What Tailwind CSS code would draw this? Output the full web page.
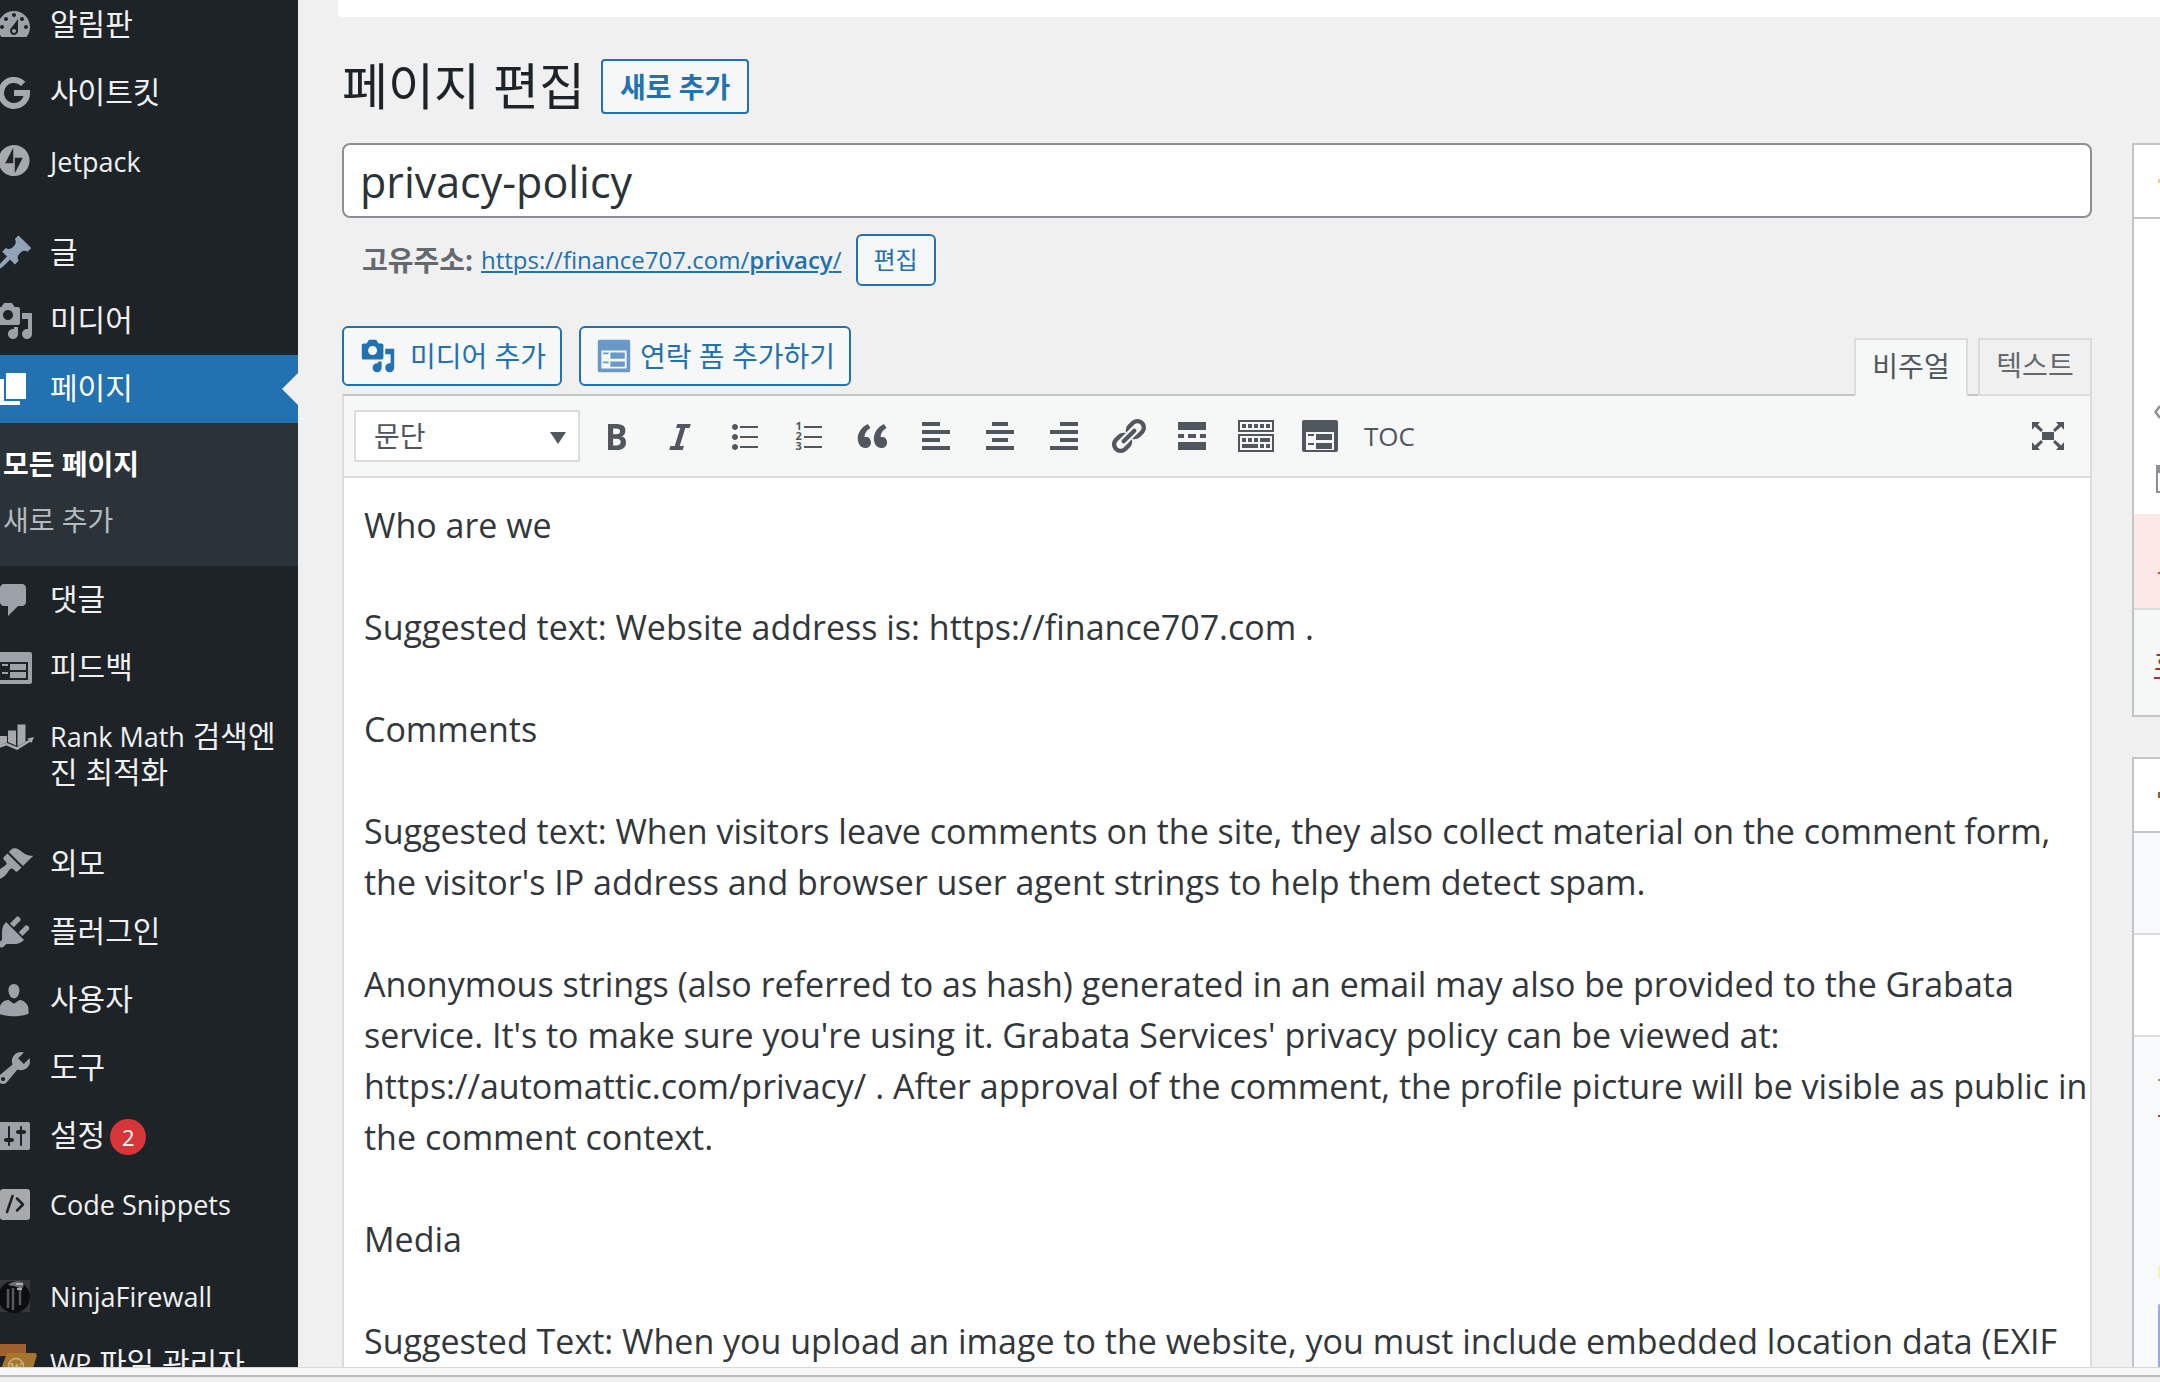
<!DOCTYPE html>
<html lang="ko">
<head>
    <meta charset="UTF-8">
    <meta name="viewport" content="width=device-width, initial-scale=1.0">
    <title>페이지 편집</title>
    <script src="https://cdn.jsdelivr.net/npm/@tailwindcss/browser@4"></script>
</head>
<body class="h-screen overflow-hidden flex flex-col bg-[#f0f0f0] text-[#1d2327] font-['Open_Sans','Noto_Sans_CJK_KR',sans-serif]">
  <div class="flex flex-1 min-h-0 overflow-hidden">

    <!-- admin menu -->
    <nav class="shrink-0 w-[298px] overflow-hidden bg-[#1d2327] text-[#f0f0f1] text-[30px] leading-[38px]">
      <ul class="-ml-[22px] -mt-[9px] w-80">
        <li>
          <a href="#" class="flex h-[68px] px-4 py-3.5">
            <svg class="size-10 shrink-0 fill-[#9ca2a7]" viewBox="0 0 20 20"><path d="M3.76 16h12.48c1.1-1.37 1.76-3.11 1.76-5 0-4.42-3.58-8-8-8s-8 3.58-8 8c0 1.89.66 3.63 1.76 5zM10 4c.55 0 1 .45 1 1s-.45 1-1 1-1-.45-1-1 .45-1 1-1zM6 6c.55 0 1 .45 1 1s-.45 1-1 1-1-.45-1-1 .45-1 1-1zm8 0c.55 0 1 .45 1 1s-.45 1-1 1-1-.45-1-1 .45-1 1-1zm-5.37 5.55L12 7v6c0 1.1-.9 2-2 2s-2-.9-2-2c0-.57.24-1.08.63-1.45zM4 10c.55 0 1 .45 1 1s-.45 1-1 1-1-.45-1-1 .45-1 1-1zm12 0c.55 0 1 .45 1 1s-.45 1-1 1-1-.45-1-1 .45-1 1-1zm-5 3c0-.55-.45-1-1-1s-1 .45-1 1 .45 1 1 1 1-.45 1-1z"/></svg>
            <span class="pl-4">알림판</span>
          </a>
        </li>
        <li>
          <a href="#" class="flex h-[68px] px-4 py-3.5">
            <svg class="size-10 shrink-0" viewBox="0 0 40 40" fill="none" stroke="#a7aaad" stroke-width="6"><path d="M29.2 10.8A13 13 0 1 0 33 20H20"/></svg>
            <span class="pl-4">사이트킷</span>
          </a>
        </li>
        <li>
          <a href="#" class="flex h-[68px] px-4 py-3.5">
            <svg class="size-10 shrink-0 fill-[#a7aaad]" viewBox="-4.5 -4 41 41"><path d="M16 0C7.2 0 0 7.2 0 16s7.2 16 16 16 16-7.2 16-16S24.8 0 16 0zM15.2 18.7H7l8.2-15.7v15.7zM16.8 29V13.2H25L16.8 29z"/></svg>
            <span class="pl-4 text-[27px] leading-[42px]">Jetpack</span>
          </a>
        </li>
        <li class="mt-6">
          <a href="#" class="flex h-[68px] px-4 py-3.5">
            <svg class="size-10 shrink-0 fill-[#91a4b7]" viewBox="0 0 20 20"><path d="M10.44 3.02l1.82-1.82 6.36 6.35-1.83 1.82c-1.05-.68-2.48-.57-3.41.36l-.75.75c-.92.93-1.04 2.35-.35 3.41l-1.83 1.82-2.41-2.41-2.8 2.79c-.42.42-3.38 2.71-3.8 2.29s1.86-3.39 2.28-3.81l2.79-2.79L4.1 9.36l1.83-1.82c1.05.69 2.48.57 3.4-.36l.75-.75c.93-.92 1.05-2.35.36-3.41z"/></svg>
            <span class="pl-4">글</span>
          </a>
        </li>
        <li>
          <a href="#" class="flex h-[68px] px-4 py-3.5">
            <svg class="size-10 shrink-0 fill-[#9ca2a7]" viewBox="0 0 20 20"><path d="M13 11V4c0-.55-.45-1-1-1h-1.67L9 1H5L3.67 3H2c-.55 0-1 .45-1 1v7c0 .55.45 1 1 1h10c.55 0 1-.45 1-1zM7 4.5c1.38 0 2.5 1.12 2.5 2.5S8.38 9.5 7 9.5 4.5 8.38 4.5 7 5.62 4.5 7 4.5zM14 6h5v10.5c0 1.38-1.12 2.5-2.5 2.5S14 17.88 14 16.5s1.12-2.5 2.5-2.5c.17 0 .34.02.5.05V9h-3V6zm-4 8.05V13h2v3.5c0 1.38-1.12 2.5-2.5 2.5S7 17.88 7 16.5 8.12 14 9.5 14c.17 0 .34.02.5.05z"/></svg>
            <span class="pl-4">미디어</span>
          </a>
        </li>
        <li>
          <a href="#" aria-current="page" class="relative flex h-[68px] px-4 py-3.5 bg-[#2271b1] text-white">
            <svg class="size-10 shrink-0 fill-white" viewBox="0 0 20 20"><path d="M6 15V2h10v13H6zm-1 1h8v2H3V5h2v11z"/></svg>
            <span class="pl-4">페이지</span>
            <svg class="absolute right-0 top-[18px] w-4 h-8 fill-[#f0f0f0]" viewBox="0 0 16 32"><path d="M16 0v32L0 16z"/></svg>
          </a>
          <ul class="h-[143px] pt-[13px] pl-[25px] bg-[#2c3338] text-[28px]">
            <li><a href="#" class="block py-2.5 leading-9 font-bold text-white">모든 페이지</a></li>
            <li><a href="#" class="block py-2.5 leading-9 text-[#b4babe]">새로 추가</a></li>
          </ul>
        </li>
        <li>
          <a href="#" class="flex h-[68px] px-4 py-3.5">
            <svg class="size-10 shrink-0 fill-[#9ca2a7]" viewBox="0 0 20 20"><path d="M5 2h9c1.1 0 2 .9 2 2v7c0 1.1-.9 2-2 2h-2l-5 5v-5H5c-1.1 0-2-.9-2-2V4c0-1.1.9-2 2-2z"/></svg>
            <span class="pl-4">댓글</span>
          </a>
        </li>
        <li>
          <a href="#" class="flex h-[68px] px-4 py-3.5">
            <svg class="size-10 shrink-0 fill-[#9ca2a7]" viewBox="0 0 20 20"><path d="M2 2h16c.55 0 1 .45 1 1v14c0 .55-.45 1-1 1H2c-.55 0-1-.45-1-1V3c0-.55.45-1 1-1zm15 14V7H3v9h14zM4 8v1h3V8H4zm4 0v3h8V8H8zm-4 4v1h3v-1H4zm4 0v3h8v-3H8z"/></svg>
            <span class="pl-4">피드백</span>
          </a>
        </li>
        <li>
          <a href="#" class="flex h-[104px] px-4 py-4">
            <svg class="size-10 shrink-0" viewBox="0 0 40 40" fill="#a7aaad"><path d="M4 18h9v6.5L4 28zM14 12.5h8v15L14 24zM23.5 6.5h8V24l-8 4.5z"/><path d="M3 29.5l9.5-3.5L23 30.5 36 22.5" fill="none" stroke="#a7aaad" stroke-width="2.5"/><path d="M33.5 20.5l6.5-1.5-2.5 6z"/></svg>
            <span class="pl-4 whitespace-nowrap leading-[35px]"><span class="text-[27px]">Rank Math</span> 검색엔<br>진 최적화</span>
          </a>
        </li>
        <li class="mt-6">
          <a href="#" class="flex h-[68px] px-4 py-3.5">
            <svg class="size-10 shrink-0 fill-[#9ca2a7]" viewBox="0 0 20 20"><path d="M14.48 11.06L7.41 3.99l1.5-1.5c.5-.56 2.3-.47 3.51.32 1.21.8 1.43 1.28 2.91 2.1 1.18.64 2.45 1.26 4.45.85zm-.71.71L6.7 4.7 4.93 6.47c-.39.39-.39 1.02 0 1.41l1.06 1.06c.39.39.39 1.03 0 1.42-.6.6-1.43 1.11-2.21 1.69-.35.26-.7.53-1.01.84C1.43 14.23.4 16.08 1.4 17.07c.99 1 2.84-.03 4.18-1.36.31-.31.58-.66.85-1.02.57-.78 1.08-1.61 1.69-2.21.39-.39 1.02-.39 1.41 0l1.06 1.06c.39.39 1.02.39 1.41 0z"/></svg>
            <span class="pl-4">외모</span>
          </a>
        </li>
        <li>
          <a href="#" class="flex h-[68px] px-4 py-3.5">
            <svg class="size-10 shrink-0 fill-[#9ca2a7]" viewBox="0 0 20 20"><path d="M13.11 4.36L9.87 7.6 8 5.73l3.24-3.24c.35-.34 1.05-.2 1.56.32.52.51.66 1.21.31 1.55zm-8 1.77l.91-1.12 9.01 9.01-1.19.84c-.71.71-2.63 1.16-3.82 1.16H6.14L4.9 17.26c-.59.59-1.54.59-2.12 0-.59-.58-.59-1.53 0-2.12l1.24-1.24v-3.88c0-1.13.4-3.19 1.09-3.89zm7.26 3.97l3.24-3.24c.34-.35 1.04-.21 1.55.31.52.51.66 1.21.31 1.55l-3.24 3.25z"/></svg>
            <span class="pl-4">플러그인</span>
          </a>
        </li>
        <li>
          <a href="#" class="flex h-[68px] px-4 py-3.5">
            <svg class="size-10 shrink-0 fill-[#9ca2a7]" viewBox="0 0 20 20"><path d="M10 9.25c-2.27 0-2.73-3.44-2.73-3.44C7 4.02 7.82 2 9.97 2c2.16 0 2.98 2.02 2.71 3.81 0 0-.41 3.44-2.68 3.44zm0 2.57L12.72 10c2.39 0 4.52 2.33 4.52 4.53v2.49s-3.65 1.13-7.24 1.13c-3.65 0-7.24-1.13-7.24-1.13v-2.49c0-2.25 1.94-4.48 4.47-4.48z"/></svg>
            <span class="pl-4">사용자</span>
          </a>
        </li>
        <li>
          <a href="#" class="flex h-[68px] px-4 py-3.5">
            <svg class="size-10 shrink-0 fill-[#9ca2a7]" viewBox="0 0 20 20"><path d="M16.68 9.77c-1.34 1.34-3.3 1.67-4.95.99l-5.41 6.52c-.99.99-2.59.99-3.58 0s-.99-2.59 0-3.57l6.52-5.42c-.68-1.65-.35-3.61.99-4.95 1.28-1.28 3.12-1.62 4.72-1.06l-2.89 2.89 2.82 2.82 2.86-2.87c.53 1.58.18 3.39-1.08 4.65zM3.81 16.21c.4.39 1.04.39 1.43 0 .4-.4.4-1.04 0-1.43-.39-.4-1.03-.4-1.43 0-.39.39-.39 1.03 0 1.43z"/></svg>
            <span class="pl-4">도구</span>
          </a>
        </li>
        <li>
          <a href="#" class="flex h-[68px] px-4 py-3.5">
            <svg class="size-10 shrink-0 fill-[#9ca2a7]" viewBox="0 0 20 20"><path d="M18 16V4c0-.55-.45-1-1-1H3c-.55 0-1 .45-1 1v12c0 .55.45 1 1 1h14c.55 0 1-.45 1-1zM8 11h1c.55 0 1 .45 1 1s-.45 1-1 1H8v1.5c0 .28-.22.5-.5.5s-.5-.22-.5-.5V13H6c-.55 0-1-.45-1-1s.45-1 1-1h1V5.5c0-.28.22-.5.5-.5s.5.22.5.5V11zm5-2h-1c-.55 0-1-.45-1-1s.45-1 1-1h1V5.5c0-.28.22-.5.5-.5s.5.22.5.5V7h1c.55 0 1 .45 1 1s-.45 1-1 1h-1v5.5c0 .28-.22.5-.5.5s-.5-.22-.5-.5V9z"/></svg>
            <span class="pl-4">설정</span>
            <span class="ml-[5px] mt-[3px] size-9 rounded-full bg-[#d63638] text-white text-center text-[22px] leading-9">2</span>
          </a>
        </li>
        <li>
          <a href="#" class="flex h-[68px] px-4 py-3.5">
            <svg class="size-10 shrink-0" viewBox="0 0 40 40"><rect x="6" y="5" width="30" height="31" rx="3" fill="#a7aaad"/><path d="M18.5 12L13 28M23 14.5l6 6-6 6" fill="none" stroke="#1d2327" stroke-width="2.5" stroke-linecap="round" stroke-linejoin="round"/></svg>
            <span class="pl-4 text-[27px] leading-[42px]">Code Snippets</span>
          </a>
        </li>
        <li class="mt-6">
          <a href="#" class="flex h-[68px] px-4 py-3.5">
            <svg class="size-10 shrink-0" viewBox="0 0 40 40"><rect x="4" y="4" width="32" height="32" fill="#35383b"/><circle cx="20" cy="21" r="16" fill="#0c0d0e"/><path d="M14 9c3-4 12-5 15-2 2 3-1 6-3 6-3-3-8-3-12-4z" fill="#6b6d6f"/><path d="M14 13v19M19 12v22M26 11v18" stroke="#77797b" stroke-width="2.5" opacity=".7"/><path d="M22 8h7M23 13h5" stroke="#a9abad" stroke-width="2"/></svg>
            <span class="pl-4 text-[27px] leading-[42px]">NinjaFirewall</span>
          </a>
        </li>
        <li>
          <a href="#" class="flex h-[68px] px-4 py-3.5">
            <svg class="size-10 shrink-0 overflow-visible" viewBox="0 0 40 40"><path d="M2 0h30v12H2z" fill="#a0602d"/><path d="M13 9h28q3 1 1 5l-7 24H2z" fill="#a5772d"/><circle cx="22" cy="22" r="7.5" fill="none" stroke="#c9b183" stroke-width="1.5"/><text x="22" y="27" text-anchor="middle" font-family="Liberation Serif" font-weight="700" font-size="13" fill="#c9b183">W</text></svg>
            <span class="pl-4 whitespace-nowrap"><span class="text-[27px]">WP</span> 파일 관리자</span>
          </a>
        </li>
      </ul>
    </nav>

    <main class="flex-1 min-w-0 flex flex-col pl-11">
      <div class="h-[17px] shrink-0 -ml-1 rounded-bl bg-white"></div>

      <div class="flex items-center gap-4 h-[55px] mt-[42px]">
        <h1 class="text-[50px] leading-[55px]">페이지 편집</h1>
        <a href="#" class="flex items-center h-[55px] px-[17px] border-2 border-[#2271b1] rounded bg-[#f6f7f7] text-[28px] leading-9 font-bold text-[#2271b1]">새로 추가</a>
      </div>

      <div class="flex flex-1 min-h-0 gap-10 mt-[29px]">
        <div class="flex-1 min-w-0 flex flex-col">
          <input type="text" aria-label="제목" value="privacy-policy" class="shrink-0 h-[75px] px-4 pt-0.5 border-2 border-[#8c8f94] rounded-lg bg-white text-[43px] text-[#2c3338]">

          <div class="flex items-center h-[52px] mt-4 pl-5 text-2xl text-[#646970]">
            <div class="text-[28px] leading-9 font-bold">고유주소:</div>
            <a href="#" class="ml-2 underline text-[#2271b1]">https://finance707.com/<b class="font-semibold">privacy</b>/</a>
            <button class="ml-3.5 h-[52px] w-20 border-2 border-[#2271b1] rounded-md bg-[#f6f7f7] text-2xl text-[#2271b1]">편집</button>
          </div>

          <div class="flex justify-between items-end h-[70px] mt-10">
            <div class="flex self-start gap-[17px] text-[28px] text-[#2271b1]">
              <button class="flex items-center h-[60px] pl-4 pr-3.5 border-2 border-[#2271b1] rounded-md bg-[#f6f7f7]">
                <svg class="size-9 mr-3.5 fill-[#2271b1]" viewBox="0 0 20 20"><path d="M13 11V4c0-.55-.45-1-1-1h-1.67L9 1H5L3.67 3H2c-.55 0-1 .45-1 1v7c0 .55.45 1 1 1h10c.55 0 1-.45 1-1zM7 4.5c1.38 0 2.5 1.12 2.5 2.5S8.38 9.5 7 9.5 4.5 8.38 4.5 7 5.62 4.5 7 4.5zM14 6h5v10.5c0 1.38-1.12 2.5-2.5 2.5S14 17.88 14 16.5s1.12-2.5 2.5-2.5c.17 0 .34.02.5.05V9h-3V6zm-4 8.05V13h2v3.5c0 1.38-1.12 2.5-2.5 2.5S7 17.88 7 16.5 8.12 14 9.5 14c.17 0 .34.02.5.05z"/></svg>
                미디어 추가
              </button>
              <button class="flex items-center h-[60px] pl-[15px] pr-3.5 border-2 border-[#2271b1] rounded-md bg-[#f6f7f7]">
                <svg class="size-9 mr-2 fill-[#6899c8]" viewBox="0 0 20 20"><path d="M2 1h16c.55 0 1 .45 1 1v16c0 .55-.45 1-1 1H2c-.55 0-1-.45-1-1V2c0-.55.45-1 1-1zm15 16V7H3v10h14zM4 8v1h3V8H4zm4 0v3.5h8V8H8zm-4 5v1h3v-1H4zm4 0v3h8v-3H8z"/></svg>
                연락 폼 추가하기
              </button>
            </div>
            <div class="flex gap-2.5 text-[28px]">
              <button class="relative z-10 h-[58px] w-[114px] pb-1 border-2 border-b-0 border-[#dcdcde] bg-[#f6f7f7] text-[#50575e]">비주얼</button>
              <button class="relative h-[58px] w-[114px] pb-1 border-2 border-[#dcdcde] bg-[#f0f0f0] text-[#646970]">텍스트</button>
            </div>
          </div>

          <div class="flex-1 min-h-0 flex flex-col border-x-2 border-[#dcdcde] border-t-2 border-t-[#c3c4c7] bg-white -mt-0.5">
            <!-- toolbar -->
            <div class="shrink-0 flex items-center h-[82px] pl-2.5 pr-[22px] border-b-2 border-[#dcdcde] bg-[#f6f7f7] fill-[#50575e]">
              <div class="relative">
                <select aria-label="문단 형식" class="appearance-none w-[226px] h-[52px] px-[18px] border-2 border-[#dcdcde] bg-white text-[28px] leading-9 text-[#50575e]">
                  <option>문단</option>
                </select>
                <svg class="absolute right-3.5 top-[22px] w-4 h-3" viewBox="0 0 16 12"><path d="M0 0h16L8 12z"/></svg>
              </div>
              <div class="flex ml-1">
                <button aria-label="굵게" class="w-16 h-12 grid place-items-center"><svg class="size-10" viewBox="0 0 20 20"><path d="M6 4v13h4.54c1.37 0 2.46-.33 3.26-1 .8-.66 1.2-1.58 1.2-2.77 0-.84-.17-1.51-.51-2.01s-.9-.85-1.67-1.03v-.09c.57-.1 1.02-.4 1.36-.9s.51-1.13.51-1.91c0-1.14-.39-1.98-1.17-2.5C12.75 4.26 11.5 4 9.78 4H6zm2.57 5.15V6.26h1.36c.73 0 1.27.11 1.61.32.34.22.51.58.51 1.07 0 .54-.16.92-.47 1.15s-.82.35-1.51.35h-1.5zm0 2.19h1.6c1.44 0 2.16.53 2.16 1.61 0 .6-.17 1.05-.51 1.34s-.86.43-1.57.43H8.57v-3.38z"/></svg></button>
                <button aria-label="기울임" class="w-16 h-12 grid place-items-center"><svg class="size-10" viewBox="0 0 20 20"><path d="M14.78 6h-2.13l-2.8 9h2.12l-.62 2H4.6l.62-2h2.14l2.8-9H8.03l.62-2h6.75z"/></svg></button>
                <button aria-label="글머리 목록" class="w-16 h-12 grid place-items-center"><svg class="size-10" viewBox="0 0 20 20"><path d="M5.5 7C4.67 7 4 6.33 4 5.5 4 4.68 4.67 4 5.5 4 6.32 4 7 4.68 7 5.5 7 6.33 6.32 7 5.5 7zM8 5h9v1H8V5zm-2.5 7c-.83 0-1.5-.67-1.5-1.5C4 9.68 4.67 9 5.5 9c.82 0 1.5.68 1.5 1.5 0 .83-.68 1.5-1.5 1.5zM8 10h9v1H8v-1zm-2.5 7c-.83 0-1.5-.67-1.5-1.5 0-.82.67-1.5 1.5-1.5.82 0 1.5.68 1.5 1.5 0 .83-.68 1.5-1.5 1.5zM8 15h9v1H8v-1z"/></svg></button>
                <button aria-label="번호 목록" class="w-16 h-12 grid place-items-center"><svg class="size-10" viewBox="0 0 20 20"><path d="M8 5h9v1H8zM8 10h9v1H8zM8 15h9v1H8z"/><g font-family="Open Sans" font-weight="700" font-size="5.5"><text x="3.8" y="7">1</text><text x="3.8" y="12">2</text><text x="3.8" y="17">3</text></g></svg></button>
                <button aria-label="인용" class="w-16 h-12 grid place-items-center"><svg class="size-10" viewBox="0 0 20 20"><path d="M9.49 13.22c0-.74-.2-1.38-.61-1.9-.62-.78-1.83-.88-2.53-.72-.29-1.65 1.11-3.75 2.92-4.65L7.88 4c-2.73 1.3-5.42 4.28-4.96 8.05C3.21 14.43 4.59 16 6.54 16c.85 0 1.56-.25 2.12-.75s.83-1.18.83-2.03zm8.05 0c0-.74-.2-1.38-.61-1.9-.63-.78-1.83-.88-2.53-.72-.29-1.65 1.11-3.75 2.92-4.65L15.93 4c-2.73 1.3-5.41 4.28-4.95 8.05.29 2.38 1.66 3.95 3.61 3.95.85 0 1.56-.25 2.12-.75s.83-1.18.83-2.03z"/></svg></button>
                <button aria-label="왼쪽 정렬" class="w-16 h-12 grid place-items-center"><svg class="size-10" viewBox="0 0 20 20"><path d="M12 5V3H3v2h9zm5 4V7H3v2h14zm-5 4v-2H3v2h9zm5 4v-2H3v2h14z"/></svg></button>
                <button aria-label="가운데 정렬" class="w-16 h-12 grid place-items-center"><svg class="size-10" viewBox="0 0 20 20"><path d="M14 5V3H6v2h8zm3 4V7H3v2h14zm-3 4v-2H6v2h8zm3 4v-2H3v2h14z"/></svg></button>
                <button aria-label="오른쪽 정렬" class="w-16 h-12 grid place-items-center"><svg class="size-10" viewBox="0 0 20 20"><path d="M17 5V3H8v2h9zm0 4V7H3v2h14zm0 4v-2H8v2h9zm0 4v-2H3v2h14z"/></svg></button>
                <button aria-label="링크" class="w-16 h-12 grid place-items-center"><svg class="size-10" viewBox="0 0 20 20"><path d="M17.74 2.76c1.68 1.69 1.68 4.41 0 6.1l-1.53 1.52c-1.12 1.12-2.7 1.47-4.14 1.09l2.62-2.61.76-.77.76-.76c.84-.84.84-2.2 0-3.04-.84-.85-2.2-.85-3.04 0l-.77.76-3.38 3.38c-.37-1.44-.02-3.02 1.1-4.14l1.52-1.53c1.69-1.68 4.42-1.68 6.1 0zM8.59 13.43l5.34-5.34c.42-.42.42-1.1 0-1.52-.44-.43-1.13-.39-1.53 0l-5.33 5.34c-.42.42-.42 1.1 0 1.52.44.43 1.13.39 1.52 0zm-.76 2.29l4.14-4.15c.38 1.44.03 3.02-1.09 4.14l-1.52 1.53c-1.69 1.68-4.41 1.68-6.1 0-1.68-1.68-1.68-4.42 0-6.1l1.53-1.52c1.12-1.12 2.7-1.47 4.14-1.1l-4.14 4.15c-.85.84-.85 2.2 0 3.05.84.84 2.2.84 3.04 0z"/></svg></button>
                <button aria-label="더보기 태그" class="w-16 h-12 grid place-items-center"><svg class="size-10" viewBox="0 0 20 20"><path d="M17 7V3H3v4h14zM6 11V9H3v2h3zm6 0V9H8v2h4zm5 0V9h-3v2h3zm0 6v-4H3v4h14z"/></svg></button>
                <button aria-label="툴바 토글" class="w-16 h-12 grid place-items-center"><svg class="size-10" viewBox="0 0 20 20"><path d="M19 2v6H1V2h18zm-1 5V3H2v4h16zM3 4h2v2H3zM6 4h2v2H6zM9 4h2v2H9zM12 4h2v2h-2zM15 4h2v2h-2zM19 9v9H1V9h18zm-1 8v-7H2v7h16zM3 11h2v2H3zM6 11h2v2H6zM9 11h2v2H9zM12 11h5v2h-5zM3 14h8v2H3zM12 14h2v2h-2zM15 14h2v2h-2z"/></svg></button>
                <button aria-label="연락 폼" class="w-16 h-12 grid place-items-center"><svg class="size-10" viewBox="0 0 20 20"><path d="M2 2h16c.55 0 1 .45 1 1v14c0 .55-.45 1-1 1H2c-.55 0-1-.45-1-1V3c0-.55.45-1 1-1zm15 15V8H3v9h14zM4 9v1h3V9H4zm4 0v3h8V9H8zm-4 4.5v1h3v-1H4zm4 0v3h8v-3H8z"/></svg></button>
                <button class="px-3 h-12 text-[26px] text-[#50575e]">TOC</button>
              </div>
              <button aria-label="전체 화면" class="ml-auto h-12 grid place-items-center"><svg class="size-10" viewBox="0 0 20 20"><path d="M7 8h6v4H7zM2 3h4L4.9 4.2 7.5 7 6.5 8 3.4 5.3 2 7zM18 3h-4l1.1 1.2L12.5 7l1 1 3.1-2.7L18 7zM2 17h4l-1.1-1.2L7.5 13l-1-1-3.1 2.7L2 13zM18 17h-4l1.1-1.2-2.6-2.8 1-1 3.1 2.7L18 13z"/></svg></button>
            </div>

            <article contenteditable="true" class="flex-1 min-h-0 overflow-hidden flex flex-col gap-[51px] pl-5 pt-[22px] text-[34px] leading-[51px] text-[#32373c] whitespace-nowrap outline-none">
              <p>Who are we</p>
              <p>Suggested text: Website address is: https://finance707.com .</p>
              <p>Comments</p>
              <p>Suggested text: When visitors leave comments on the site, they also collect material on the comment form,<br>
                the visitor's IP address and browser user agent strings to help them detect spam.</p>
              <p>Anonymous strings (also referred to as hash) generated in an email may also be provided to the Grabata<br>
                service. It's to make sure you're using it. Grabata Services' privacy policy can be viewed at:<br>
                https://automattic.com/privacy/ . After approval of the comment, the profile picture will be visible as public in<br>
                the comment context.</p>
              <p>Media</p>
              <p>Suggested Text: When you upload an image to the website, you must include embedded location data (EXIF</p>
            </article>
          </div>
        </div>

        <!-- side boxes -->
        <aside class="shrink-0 w-7 overflow-hidden flex flex-col text-[28px] leading-9">
          <section class="shrink-0 h-[574px] flex flex-col border-2 border-r-0 border-[#c3c4c7] bg-white">
            <div class="shrink-0 flex items-center justify-end h-[74px] border-b-2 border-[#c3c4c7]"><span class="w-0.5 h-1 bg-[#e5cf8b]"></span></div>
            <div class="flex-1 flex flex-col items-end justify-end gap-[46px] pb-[21px]">
              <svg class="w-1.5 h-3.5" viewBox="0 0 6 14" fill="none" stroke="#8c8f94" stroke-width="2.5"><path d="M6 1L1.5 7 6 13"/></svg>
              <svg class="w-1 h-7" viewBox="0 0 4 28" fill="#8c8f94"><path d="M0 0h4v8H2v18h2v2H0z"/></svg>
            </div>
            <div class="shrink-0 flex items-center justify-end h-24 pt-6 border-b-2 border-[#dcdcde] bg-[#fce9e7]"><span class="w-0.5 h-0.5 bg-[#d5452f]"></span></div>
            <div class="shrink-0 h-[105px] pt-9 pl-5 bg-[#f6f7f7]"><a href="#" class="whitespace-nowrap underline text-[#b32d2e]">휴지통</a></div>
          </section>
          <section class="flex-1 mt-10 flex flex-col border-2 border-r-0 border-b-0 border-[#c3c4c7] bg-[#f8f9fb]">
            <div class="shrink-0 flex items-center justify-end h-[74px] border-b-2 border-[#c3c4c7] bg-white"><span class="w-0.5 h-1.5 bg-[#a05a1c]"></span></div>
            <div class="shrink-0 h-[102px] border-b-2 border-[#dcdcde]"></div>
            <div class="shrink-0 h-[102px] border-b-2 border-[#dcdcde] bg-white"></div>
            <div class="flex-1 flex flex-col items-end pt-[42px]">
              <span class="w-0.5 h-0.5 bg-[#b98a5e]"></span>
              <span class="mt-[34px] w-0.5 h-0.5 bg-[#8a5a3a]"></span>
              <span class="mt-[149px] w-0.5 h-3 bg-[#f7f3b0]"></span>
              <span class="mt-[26px] w-0.5 flex-1 rounded-tl bg-[#9aa8f0]"></span>
            </div>
          </section>
        </aside>
      </div>
    </main>
  </div>

  <div class="shrink-0 h-2.5 border-t border-b-2 border-t-[#d9d9d9] border-b-[#bbbbbb] bg-[#f7f7f7]"></div>
  <div class="shrink-0 h-[5px] bg-[#efefef]"></div>
</body>
</html>
